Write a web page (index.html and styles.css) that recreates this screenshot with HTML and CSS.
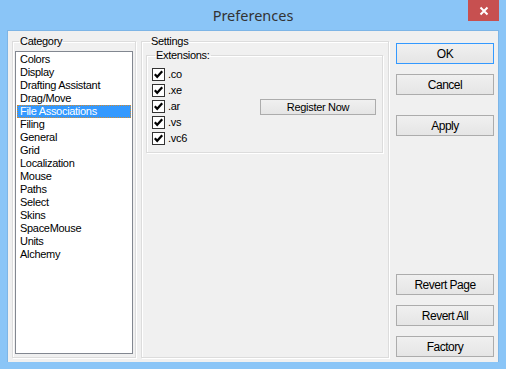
FILE: index.html
```html
<!DOCTYPE html>
<html>
<head>
<meta charset="utf-8">
<link rel="stylesheet" href="styles.css">
</head>
<body>
<div class="window">
  <div class="titlebar">
    <span></span>
    <div class="title">Preferences</div>
    <div class="close"><svg width="10" height="10" viewBox="0 0 10 10"><path d="M1.5 1.5 L8.5 8.5 M8.5 1.5 L1.5 8.5" stroke="#fff" stroke-width="2"/></svg></div>
  </div>
  <div class="client">
    <fieldset class="group cat">
      <legend>Category</legend>
      <ul class="listbox">
        <li>Colors</li>
        <li>Display</li>
        <li>Drafting Assistant</li>
        <li>Drag/Move</li>
        <li class="sel">File Associations</li>
        <li>Filing</li>
        <li>General</li>
        <li>Grid</li>
        <li>Localization</li>
        <li>Mouse</li>
        <li>Paths</li>
        <li>Select</li>
        <li>Skins</li>
        <li>SpaceMouse</li>
        <li>Units</li>
        <li>Alchemy</li>
      </ul>
    </fieldset>
    <fieldset class="group settings">
      <legend>Settings</legend>
      <fieldset class="group ext">
        <legend>Extensions:</legend>
        <div class="ext-body">
          <div class="checks">
            <label class="chk"><span class="box"><svg width="11" height="11" viewBox="0 0 11 11"><path d="M1.8 5.2 L4.2 7.8 L9.2 2.2" fill="none" stroke="#000" stroke-width="2.2"/></svg></span>.co</label>
            <label class="chk"><span class="box"><svg width="11" height="11" viewBox="0 0 11 11"><path d="M1.8 5.2 L4.2 7.8 L9.2 2.2" fill="none" stroke="#000" stroke-width="2.2"/></svg></span>.xe</label>
            <label class="chk"><span class="box"><svg width="11" height="11" viewBox="0 0 11 11"><path d="M1.8 5.2 L4.2 7.8 L9.2 2.2" fill="none" stroke="#000" stroke-width="2.2"/></svg></span>.ar</label>
            <label class="chk"><span class="box"><svg width="11" height="11" viewBox="0 0 11 11"><path d="M1.8 5.2 L4.2 7.8 L9.2 2.2" fill="none" stroke="#000" stroke-width="2.2"/></svg></span>.vs</label>
            <label class="chk"><span class="box"><svg width="11" height="11" viewBox="0 0 11 11"><path d="M1.8 5.2 L4.2 7.8 L9.2 2.2" fill="none" stroke="#000" stroke-width="2.2"/></svg></span>.vc6</label>
          </div>
          <button class="btn reg">Register Now</button>
        </div>
      </fieldset>
    </fieldset>
    <div class="buttons">
      <button class="btn default">OK</button>
      <button class="btn">Cancel</button>
      <button class="btn apply">Apply</button>
      <button class="btn revert">Revert Page</button>
      <button class="btn">Revert All</button>
      <button class="btn">Factory</button>
    </div>
  </div>
</div>
</body>
</html>
```
FILE: styles.css
```css
html, body {
  margin: 0;
  padding: 0;
}
body {
  width: 506px;
  height: 369px;
  background: #8ac5f7;
  font-family: "Liberation Sans", Arial, sans-serif;
  font-size: 11px;
  letter-spacing: -0.3px;
  color: #000;
  overflow: hidden;
}
.window {
  display: flex;
  flex-direction: column;
  height: 369px;
}
.titlebar {
  height: 30px;
  display: grid;
  grid-template-columns: 1fr auto 1fr;
  padding: 0 7px;
}
.title {
  font-family: "Noto Sans", "Open Sans", sans-serif;
  font-size: 14.5px;
  letter-spacing: 0;
  color: #333;
  line-height: 30px;
}
.close {
  justify-self: end;
  width: 31px;
  height: 21px;
  background: #c75050;
  display: flex;
  align-items: center;
  justify-content: center;
}
.close svg { display: block; }
.client {
  margin: 0 7px;
  height: 332px;
  box-sizing: border-box;
  border: 1px solid #7db5e6;
  border-bottom: none;
  background: #f0f0f0;
  display: flex;
  align-items: flex-start;
  padding: 4px 4px 0 4px;
  gap: 5px;
}
.group {
  margin: 0;
  border: 1px solid #dcdcdc;
  box-shadow: inset 1px 1px 0 #fff, 1px 1px 0 #fff;
  min-width: 0;
}
.group legend {
  padding: 0 1px;
  line-height: 13px;
  height: 13px;
}
.cat {
  width: 124px;
  height: 323px;
  box-sizing: border-box;
  padding: 3px 2px 0 2px;
}
.cat legend { margin-left: 4px; }
.listbox {
  list-style: none;
  margin: 0;
  padding: 1px 1px 0 1px;
  width: 118px;
  height: 303px;
  box-sizing: border-box;
  border: 1px solid #828790;
  background: #fff;
}
.listbox li {
  height: 13px;
  line-height: 13px;
  padding-left: 3px;
  white-space: nowrap;
}
.listbox li.sel {
  background: #3399ff;
  color: #fff;
  outline: 1px dotted #d08a30;
  outline-offset: -1px;
}
.settings {
  width: 248px;
  height: 323px;
  box-sizing: border-box;
  padding: 1px 5px 0 4px;
}
.settings legend { margin-left: 4px; }
.ext {
  padding: 6px 5px 7px 5px;
}
.ext legend { margin-left: 3px; }
.ext-body {
  display: flex;
  align-items: center;
}
.checks {
  width: 108px;
  display: flex;
  flex-direction: column;
  gap: 3px;
}
.chk {
  display: flex;
  align-items: center;
  gap: 3px;
  height: 13px;
  line-height: 13px;
}
.box {
  width: 13px;
  height: 13px;
  box-sizing: border-box;
  border: 1px solid #333;
  background: #fff;
  display: flex;
  align-items: center;
  justify-content: center;
}
.box svg { display: block; }
.btn {
  font-family: "Liberation Sans", Arial, sans-serif;
  font-size: 11px;
  letter-spacing: -0.3px;
  color: #000;
  margin: 0;
  padding: 0;
  box-sizing: border-box;
  border: 1px solid #acacac;
  background: linear-gradient(#f0f0f0, #e5e5e5);
  border-radius: 0;
}
.reg {
  width: 116px;
  height: 16px;
  line-height: 14px;
}
.buttons {
  margin-left: 2px;
  width: 98px;
  height: 322px;
  box-sizing: border-box;
  padding: 8px 0 0 0;
  display: flex;
  flex-direction: column;
  gap: 10px;
}
.buttons .btn {
  width: 98px;
  height: 21px;
  font-size: 12px;
  letter-spacing: -0.5px;
}
.buttons .default {
  border-color: #3399ff;
}
.buttons .apply { margin-top: 10px; }
.buttons .revert { margin-top: auto; }
```
